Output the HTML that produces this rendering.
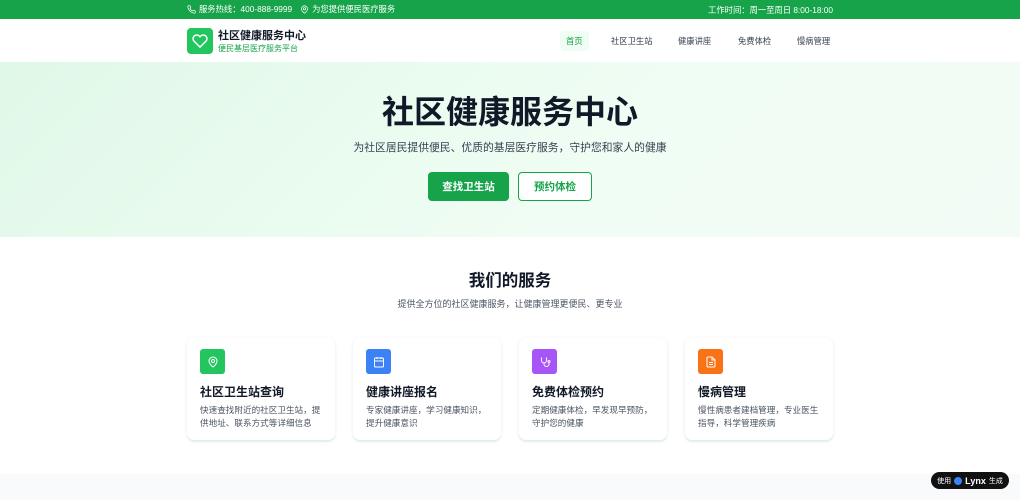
<!DOCTYPE html><html><head><meta charset="utf-8"><style>
*{margin:0;padding:0;box-sizing:border-box}
body{width:1020px;height:500px;overflow:hidden;font-family:"Liberation Sans","Noto Sans CJK SC",sans-serif;background:#fff;color:#111827;position:relative}
.top{height:19px;background:#16a34a;color:#fff;font-size:8.3px;display:flex;align-items:center;justify-content:space-between;padding:0 187px}
.top span{display:inline-flex;align-items:center;gap:3px;margin-right:8px}
.nav{height:43px;position:relative}
.logo{position:absolute;left:187px;top:8px;display:flex;align-items:center;gap:5px}
.lg{width:26px;height:26px;background:#22c55e;border-radius:4px;display:flex;align-items:center;justify-content:center}
.lt b{display:block;font-size:11px}
.lt i{font-style:normal;font-size:8px;color:#16a34a;display:block}
.menu a{position:absolute;top:14px;font-size:8.3px;color:#374151;padding:3px 6px;border-radius:4px;line-height:10px}
.menu a.on{background:#f0fdf4;color:#16a34a;padding:5px 6px;top:12px}
.hero{height:175px;background:linear-gradient(135deg,#e0f8e8,#f0fdf4 60%,#f3fbf5);text-align:center}
.hero h1{font-size:32px;padding-top:30px;line-height:40px;color:#111827}
.hero p{font-size:10.8px;color:#374151;margin-top:7px}
.btns{margin-top:17px;display:flex;justify-content:center;gap:9px}
.btns div{height:29px;border-radius:4px;font-size:10.5px;font-weight:bold;display:flex;align-items:center;justify-content:center}
.b1{width:81px;background:#16a34a;color:#fff}
.b2{width:74px;border:1.5px solid #16a34a;color:#16a34a;background:#fff}
h2{text-align:center;font-size:16.5px;margin-top:30px}
.sub{text-align:center;font-size:9px;color:#4b5563;margin-top:6px}
.cards{position:absolute;top:338px;left:187px;display:flex;gap:18px}
.card{width:148px;height:102px;border-radius:7px;box-shadow:0 1px 4px rgba(0,0,0,.08),0 2px 0 #ecfbf1;padding:11px 13px}
.ic{width:25px;height:25px;border-radius:3px;display:flex;align-items:center;justify-content:center}
.card b{display:block;font-size:12px;margin-top:9px}
.card p{font-size:8.6px;color:#4b5563;line-height:13px;margin-top:4px}
.foot{position:absolute;top:474px;left:0;width:1020px;height:26px;background:#f9fafb}
.lynx{position:absolute;left:931px;top:472px;width:78px;height:17px;background:#111;border-radius:9px;color:#fff;font-size:7px;display:flex;align-items:center;justify-content:center;gap:3px}
</style></head><body>
<div class="top"><div><span><svg width="9" height="9" viewBox="0 0 24 24" fill="none" stroke="#fff" stroke-width="2"><path d="M22 16.9v3a2 2 0 0 1-2.2 2 19.8 19.8 0 0 1-8.6-3.1 19.5 19.5 0 0 1-6-6A19.8 19.8 0 0 1 2.1 4.2 2 2 0 0 1 4.1 2h3a2 2 0 0 1 2 1.7c.1 1 .4 1.9.7 2.8a2 2 0 0 1-.5 2.1L8 9.900a16 16 0 0 0 6 6l1.3-1.3a2 2 0 0 1 2.1-.4c.9.3 1.8.6 2.8.7a2 2 0 0 1 1.7 2z"/></svg>服务热线：400-888-9999</span><span><svg width="9" height="9" viewBox="0 0 24 24" fill="none" stroke="#fff" stroke-width="2"><path d="M20 10c0 6-8 12-8 12s-8-6-8-12a8 8 0 0 1 16 0z"/><circle cx="12" cy="10" r="3"/></svg>为您提供便民医疗服务</span></div><div>工作时间：周一至周日 8:00-18:00</div></div>
<div class="nav"><div class="logo"><div class="lg"><svg width="16" height="16" viewBox="0 0 24 24" fill="none" stroke="#fff" stroke-width="2.2"><path d="M20.8 4.6a5.5 5.5 0 0 0-7.8 0L12 5.7l-1-1.1a5.5 5.5 0 0 0-7.8 7.8L12 21.2l8.8-8.8a5.5 5.5 0 0 0 0-7.8z"/></svg></div><div class="lt"><b>社区健康服务中心</b><i>便民基层医疗服务平台</i></div></div>
<div class="menu"><a class="on" style="left:560px">首页</a><a style="left:605px">社区卫生站</a><a style="left:672px">健康讲座</a><a style="left:732px">免费体检</a><a style="left:791px">慢病管理</a></div></div>
<div class="hero"><h1>社区健康服务中心</h1><p>为社区居民提供便民、优质的基层医疗服务，守护您和家人的健康</p><div class="btns"><div class="b1">查找卫生站</div><div class="b2">预约体检</div></div></div>
<h2>我们的服务</h2><div class="sub">提供全方位的社区健康服务，让健康管理更便民、更专业</div>
<div class="cards">
<div class="card"><div class="ic" style="background:#22c55e"><svg width="12" height="12" viewBox="0 0 24 24" fill="none" stroke="#fff" stroke-width="2"><path d="M20 10c0 6-8 12-8 12s-8-6-8-12a8 8 0 0 1 16 0z"/><circle cx="12" cy="10" r="3"/></svg></div><b>社区卫生站查询</b><p>快速查找附近的社区卫生站，提供地址、联系方式等详细信息</p></div>
<div class="card"><div class="ic" style="background:#3b82f6"><svg width="12" height="12" viewBox="0 0 24 24" fill="none" stroke="#fff" stroke-width="2"><rect x="3" y="4" width="18" height="18" rx="2"/><path d="M16 2v4M8 2v4M3 10h18"/></svg></div><b>健康讲座报名</b><p>专家健康讲座，学习健康知识，提升健康意识</p></div>
<div class="card"><div class="ic" style="background:#a855f7"><svg width="12" height="12" viewBox="0 0 24 24" fill="none" stroke="#fff" stroke-width="2"><path d="M5 3v6a5 5 0 0 0 10 0V3"/><path d="M10 14v2a5 5 0 0 0 10 0v-3"/><circle cx="20" cy="11" r="2"/></svg></div><b>免费体检预约</b><p>定期健康体检，早发现早预防，守护您的健康</p></div>
<div class="card"><div class="ic" style="background:#f97316"><svg width="12" height="12" viewBox="0 0 24 24" fill="none" stroke="#fff" stroke-width="2"><path d="M14 2H6a2 2 0 0 0-2 2v16a2 2 0 0 0 2 2h12a2 2 0 0 0 2-2V8z"/><path d="M14 2v6h6M8 13h8M8 17h8"/></svg></div><b>慢病管理</b><p>慢性病患者建档管理，专业医生指导，科学管理疾病</p></div>
</div>
<div class="foot"></div>
<div class="lynx">使用 <span style="width:8px;height:8px;border-radius:50%;background:#3b82f6;display:inline-block"></span><b style="font-size:9px">Lynx</b> 生成</div>
</body></html>
